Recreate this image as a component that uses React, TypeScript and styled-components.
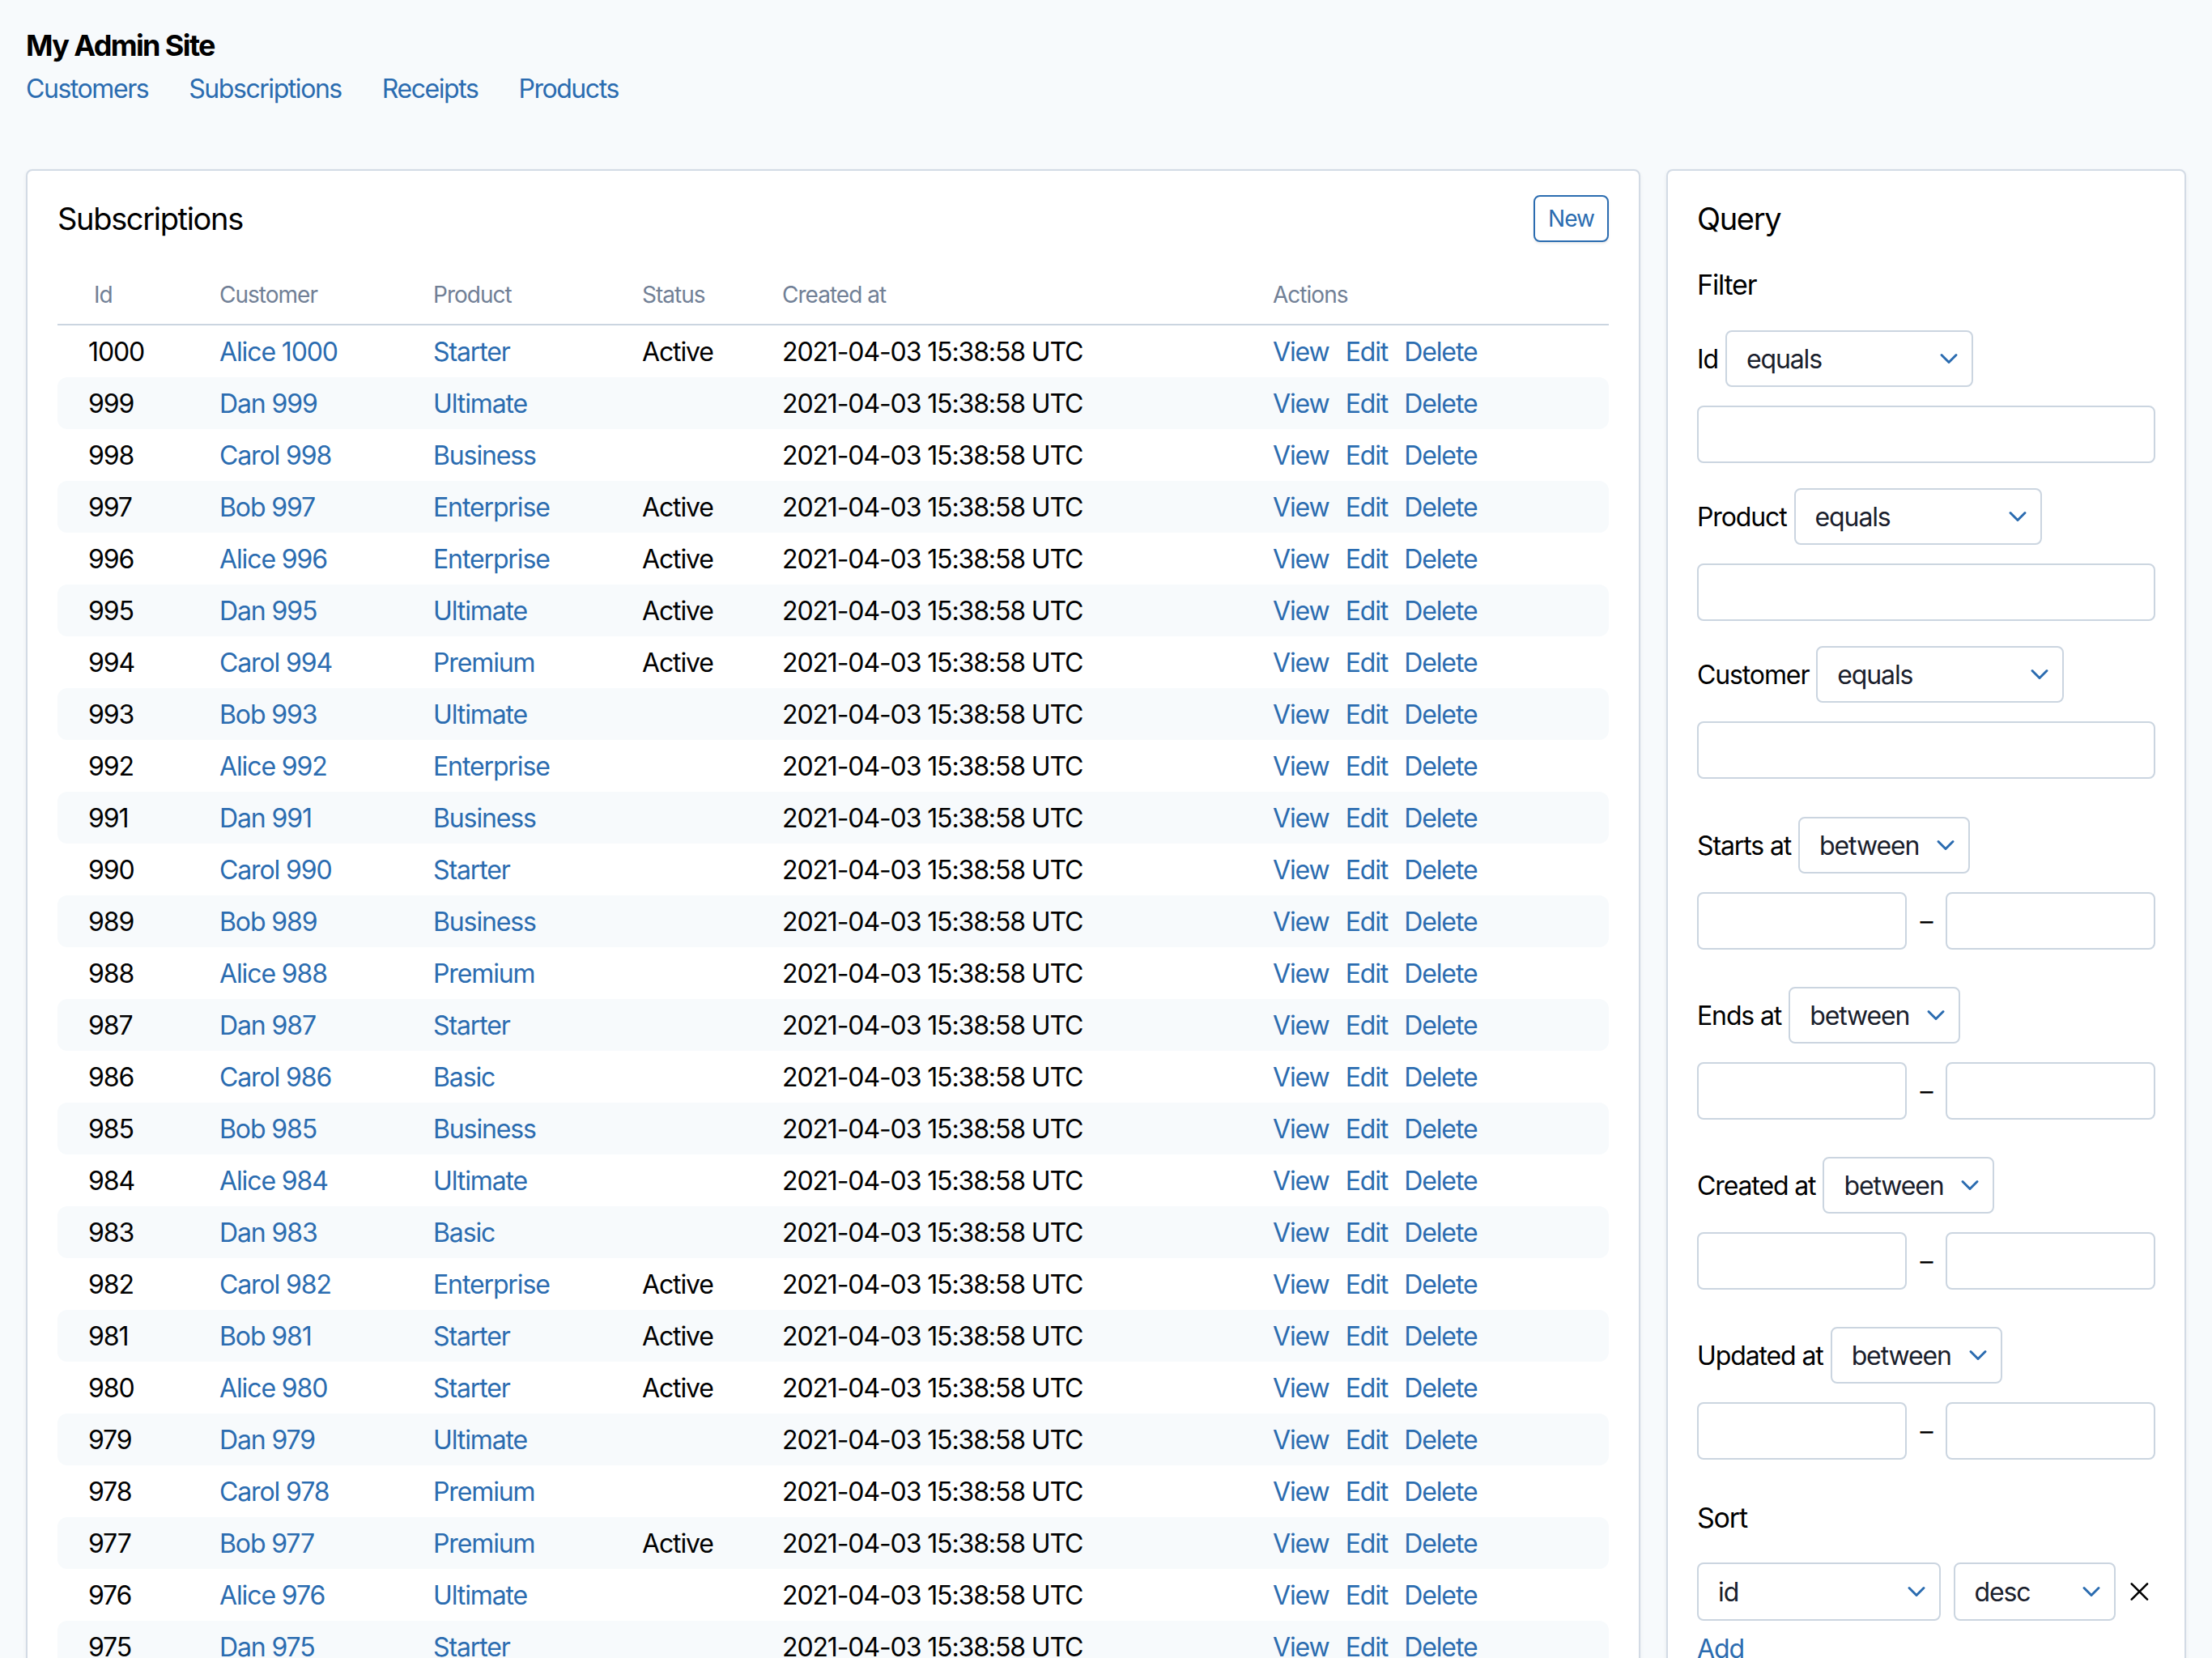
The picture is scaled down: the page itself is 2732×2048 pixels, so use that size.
import styled, { createGlobalStyle } from "styled-components";
import { ChevronDown, X } from "lucide-react";

const GlobalStyle = createGlobalStyle`
  body {
    margin: 0;
    background: #f7fafc;
    font-family: Inter, "Noto Sans", sans-serif;
    color: #000;
  }
  * {
    letter-spacing: -0.035em;
  }
`;

const Page = styled.div`
  padding: 32px 32px 0;
`;

const SiteTitle = styled.h1`
  margin: 0;
  font-size: 36px;
  line-height: 48px;
  font-weight: 700;
  letter-spacing: -0.045em;
`;

const Nav = styled.nav`
  display: flex;
  gap: 50px;
  margin-top: 6px;
  line-height: 48px;
  a {
    letter-spacing: -0.045em;
  }
`;

const Link = styled.a`
  color: #2b6cb0;
  font-size: 32px;
  text-decoration: none;
`;

const Main = styled.main`
  display: flex;
  align-items: stretch;
  gap: 32px;
  margin-top: 75px;
`;

const Card = styled.section<{ $side?: boolean }>`
  background: #fff;
  border: 2px solid #d3dbe5;
  border-radius: 8px;
  box-shadow: 0 2px 4px rgba(45, 55, 72, 0.08);
  padding: 29px ${(p) => (p.$side ? 36 : 37)}px 40px;
  ${(p) => (p.$side ? "flex: 0 0 642px;" : "flex: 1;")}
  box-sizing: border-box;
  min-width: 0;
`;

const CardHeader = styled.div`
  display: flex;
  align-items: center;
  justify-content: space-between;
  height: 60px;
`;

const CardTitle = styled.h2`
  margin: 0;
  font-size: 38px;
  font-weight: 400;
`;

const NewButton = styled.button`
  height: 58px;
  padding: 0 16px;
  background: #fff;
  border: 2px solid #2b6cb0;
  border-radius: 8px;
  color: #2b6cb0;
  font-family: inherit;
  font-size: 28px;
  box-shadow: 0 2px 3px rgba(0, 0, 0, 0.08);
`;

const columns = "162px 264px 258px 173px 606px 1fr";

const HeadRow = styled.div`
  display: grid;
  grid-template-columns: ${columns};
  padding: 0 0 12px 38px;
  margin-top: 40px;
  line-height: 48px;
  border-bottom: 2px solid #cbd5e0;
  color: #718096;
  font-size: 28px;
`;

const HeadCell = styled.div<{ $indent?: number }>`
  padding-left: ${(p) => p.$indent ?? 0}px;
`;

const Row = styled.div<{ $striped: boolean }>`
  display: grid;
  grid-template-columns: ${columns};
  align-items: center;
  height: 64px;
  padding-left: 38px;
  border-radius: 12px;
  background: ${(p) => (p.$striped ? "#f7fafc" : "transparent")};
  font-size: 32px;
`;

const Cell = styled.div`
  white-space: nowrap;
`;

const Actions = styled.div`
  display: flex;
  gap: 20px;
`;

const Section = styled.h3<{ $top: number }>`
  margin: ${(p) => p.$top}px 0 0;
  font-size: 34px;
  line-height: 48px;
  font-weight: 400;
`;

const FilterGroup = styled.div<{ $top: number }>`
  margin-top: ${(p) => p.$top}px;
  display: flex;
  flex-direction: column;
  gap: 23px;
`;

const LabelRow = styled.div`
  display: flex;
  align-items: center;
  gap: 9px;
  font-size: 32px;
`;

const Select = styled.div<{ $width: number }>`
  display: flex;
  align-items: center;
  justify-content: space-between;
  box-sizing: border-box;
  width: ${(p) => p.$width}px;
  height: 70px;
  padding: 0 10px 0 24px;
  border: 2px solid #cbd5e0;
  border-radius: 8px;
  background: #fff;
  color: #1a202c;
  font-size: 32px;
  svg {
    color: #2b6cb0;
  }
`;

const TextInput = styled.div`
  box-sizing: border-box;
  height: 71px;
  border: 2px solid #cbd5e0;
  border-radius: 8px;
  background: #fff;
`;

const RangeRow = styled.div`
  display: grid;
  grid-template-columns: 1fr auto 1fr;
  align-items: center;
  gap: 14px;
`;

const Dash = styled.span`
  font-size: 32px;
  width: 20px;
  text-align: center;
`;

const SortRow = styled.div`
  display: flex;
  align-items: center;
  gap: 16px;
  margin-top: 31px;
  height: 72px;
  > div {
    height: 72px;
  }
  svg:last-child {
    margin-left: -6px;
  }
`;

const AddLink = styled(Link)`
  display: block;
  margin-top: 11px;
  line-height: 48px;
`;

const names = ["Alice", "Bob", "Carol", "Dan"];

const rows: [string, boolean][] = [
  ["Starter", true],
  ["Ultimate", false],
  ["Business", false],
  ["Enterprise", true],
  ["Enterprise", true],
  ["Ultimate", true],
  ["Premium", true],
  ["Ultimate", false],
  ["Enterprise", false],
  ["Business", false],
  ["Starter", false],
  ["Business", false],
  ["Premium", false],
  ["Starter", false],
  ["Basic", false],
  ["Business", false],
  ["Ultimate", false],
  ["Basic", false],
  ["Enterprise", true],
  ["Starter", true],
  ["Starter", true],
  ["Ultimate", false],
  ["Premium", false],
  ["Premium", true],
  ["Ultimate", false],
  ["Starter", false],
];

const Dropdown = ({ value, width }: { value: string; width: number }) => (
  <Select $width={width}>
    <span>{value}</span>
    <ChevronDown size={36} strokeWidth={2} />
  </Select>
);

const TextFilter = ({ label, top }: { label: string; top: number }) => (
  <FilterGroup $top={top}>
    <LabelRow>
      {label}
      <Dropdown value="equals" width={306} />
    </LabelRow>
    <TextInput />
  </FilterGroup>
);

const RangeFilter = ({ label, top }: { label: string; top: number }) => (
  <FilterGroup $top={top}>
    <LabelRow>
      {label}
      <Dropdown value="between" width={212} />
    </LabelRow>
    <RangeRow>
      <TextInput />
      <Dash>–</Dash>
      <TextInput />
    </RangeRow>
  </FilterGroup>
);

const App = () => {
  return (
    <Page>
      <GlobalStyle />
      <SiteTitle>My Admin Site</SiteTitle>
      <Nav>
        <Link href="#">Customers</Link>
        <Link href="#">Subscriptions</Link>
        <Link href="#">Receipts</Link>
        <Link href="#">Products</Link>
      </Nav>
      <Main>
        <Card>
          <CardHeader>
            <CardTitle>Subscriptions</CardTitle>
            <NewButton>New</NewButton>
          </CardHeader>
          <HeadRow>
            <HeadCell $indent={7}>Id</HeadCell>
            <HeadCell>Customer</HeadCell>
            <HeadCell>Product</HeadCell>
            <HeadCell>Status</HeadCell>
            <HeadCell>Created at</HeadCell>
            <HeadCell>Actions</HeadCell>
          </HeadRow>
          {rows.map(([product, active], index) => {
            const id = 1000 - index;
            return (
              <Row key={id} $striped={index % 2 === 1}>
                <Cell>{id}</Cell>
                <Cell>
                  <Link href="#">
                    {names[id % 4]} {id}
                  </Link>
                </Cell>
                <Cell>
                  <Link href="#">{product}</Link>
                </Cell>
                <Cell>{active ? "Active" : ""}</Cell>
                <Cell>2021-04-03 15:38:58 UTC</Cell>
                <Actions>
                  <Link href="#">View</Link>
                  <Link href="#">Edit</Link>
                  <Link href="#">Delete</Link>
                </Actions>
              </Row>
            );
          })}
        </Card>
        <Card $side>
          <CardHeader>
            <CardTitle>Query</CardTitle>
          </CardHeader>
          <Section $top={28}>Filter</Section>
          <TextFilter label="Id" top={32} />
          <TextFilter label="Product" top={31} />
          <TextFilter label="Customer" top={31} />
          <RangeFilter label="Starts at" top={47} />
          <RangeFilter label="Ends at" top={46} />
          <RangeFilter label="Created at" top={46} />
          <RangeFilter label="Updated at" top={46} />
          <Section $top={48}>Sort</Section>
          <SortRow>
            <Dropdown value="id" width={309} />
            <Dropdown value="desc" width={206} />
            <X size={40} strokeWidth={1.6} />
          </SortRow>
          <AddLink href="#">Add</AddLink>
        </Card>
      </Main>
    </Page>
  );
};

export default App;
